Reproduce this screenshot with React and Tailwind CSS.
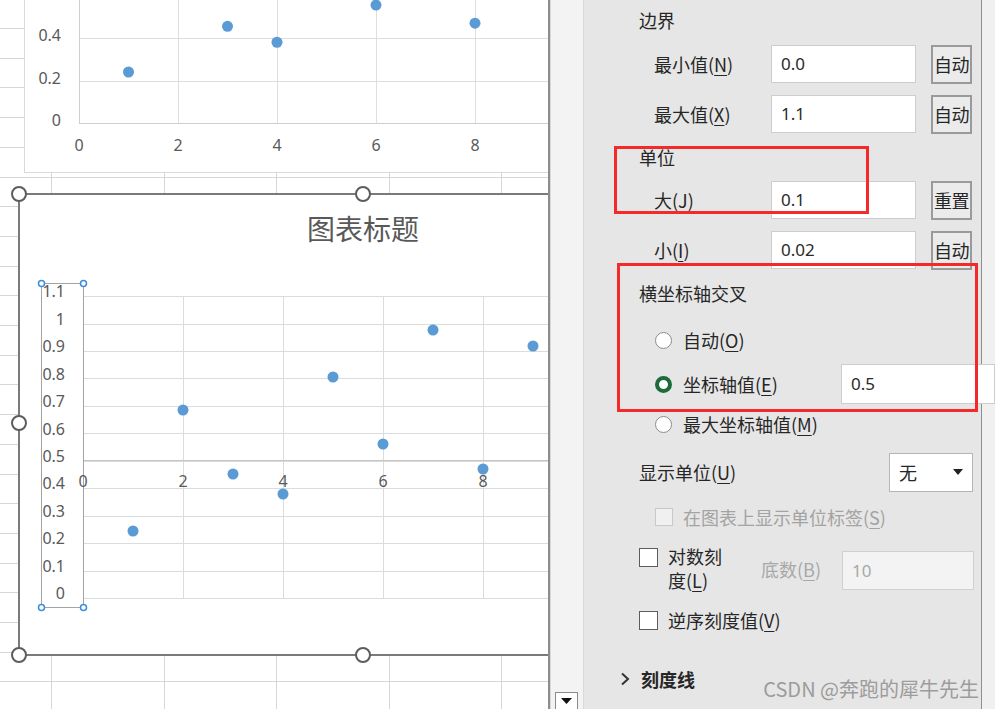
import React from "react";

const CJK = '"Noto Sans CJK SC", "Noto Sans", sans-serif';
const NUM = '"Noto Sans", "Open Sans", sans-serif';

const sheetRows = Array.from({ length: 25 }, (_, i) => 28 + 29.7 * (i - 1));
const sheetCols = [51, 163.5, 276, 388.5, 501];

function M({ t, k }) {
  return (
    <span>
      {t}(<span className="underline underline-offset-[3px] decoration-1">{k}</span>)
    </span>
  );
}

function SheetGrid() {
  return (
    <svg className="absolute left-0 top-0" width="548" height="709" shapeRendering="crispEdges">
      {sheetRows.map((y, i) => (
        <line key={"r" + i} x1="0" x2="548" y1={Math.round(y) + 0.5} y2={Math.round(y) + 0.5} stroke="#d6d6d6" />
      ))}
      {sheetCols.map((x, i) => (
        <line key={"c" + i} x1={Math.round(x) + 0.5} x2={Math.round(x) + 0.5} y1="0" y2="709" stroke="#d6d6d6" />
      ))}
    </svg>
  );
}

function Chart1() {
  const yv = (v) => 123 - 212.5 * v;
  const pts = [
    [1, 0.24],
    [3, 0.455],
    [4, 0.38],
    [6, 0.555],
    [8, 0.47],
  ];
  return (
    <div className="absolute left-[24px] top-[-21px] w-[700px] h-[194px] bg-white border border-[#d9d9d9]">
      <svg className="absolute left-0 top-0" width="698" height="192" viewBox="25 -20 698 192">
        <g shapeRendering="crispEdges">
          {[0.2, 0.4, 0.6].map((v) => (
            <line key={v} x1="79" x2="723" y1={Math.round(yv(v)) + 0.5} y2={Math.round(yv(v)) + 0.5} stroke="#dedede" />
          ))}
          {[178, 277, 376, 475, 574, 673].map((x) => (
            <line key={x} x1={x + 0.5} x2={x + 0.5} y1="-20" y2="123" stroke="#dedede" />
          ))}
          <line x1="79.5" x2="79.5" y1="-20" y2="123" stroke="#cfcfcf" />
          <line x1="79" x2="723" y1="123.5" y2="123.5" stroke="#cfcfcf" />
        </g>
        <g fill="#595959" fontSize="16" fontFamily={NUM}>
          {[
            ["0.6", 0.6],
            ["0.4", 0.4],
            ["0.2", 0.2],
            ["0", 0],
          ].map(([t, v]) => (
            <text key={t} x="61" y={yv(v) - 1} textAnchor="end" dominantBaseline="middle">
              {t}
            </text>
          ))}
          {[0, 2, 4, 6, 8].map((n) => (
            <text key={n} x={79 + 49.5 * n} y="147" textAnchor="middle" dominantBaseline="middle">
              {n}
            </text>
          ))}
        </g>
        {pts.map(([x, v], i) => (
          <circle key={i} cx={79 + 49.5 * x} cy={yv(v)} r="5.5" fill="#5b9bd5" />
        ))}
      </svg>
    </div>
  );
}

function Chart2() {
  const gy = (k) => 598 - 27.45 * k;
  const labels = ["0", "0.1", "0.2", "0.3", "0.4", "0.5", "0.6", "0.7", "0.8", "0.9", "1", "1.1"];
  const pts = [
    [133, 531],
    [183, 410],
    [233, 474],
    [283, 494],
    [333, 377],
    [383, 444],
    [433, 330],
    [483, 469],
    [533, 346],
  ];
  return (
    <div className="absolute left-[18px] top-[193px] w-[690px] h-[463px] bg-white border-2 border-[#7a7a7a]">
      <svg className="absolute left-0 top-0" width="686" height="459" viewBox="20 195 686 459">
        <g shapeRendering="crispEdges">
          {labels.map((_, k) => (
            <line key={k} x1="83" x2="706" y1={Math.round(gy(k)) + 0.5} y2={Math.round(gy(k)) + 0.5} stroke="#dcdcdc" />
          ))}
          {[183, 283, 383, 483, 583, 683].map((x) => (
            <line key={x} x1={x + 0.5} x2={x + 0.5} y1="296" y2="598" stroke="#dcdcdc" />
          ))}
          <line x1="83" x2="706" y1="460.5" y2="460.5" stroke="#c4c4c4" />
          <rect x="41.5" y="283.5" width="42" height="324" fill="none" stroke="#a3a3a3" strokeWidth="1.5" />
        </g>
        <g fill="#595959" fontSize="16" fontFamily={NUM}>
          {labels.map((t, k) => (
            <text key={t} x="65" y={gy(k) - 3} textAnchor="end" dominantBaseline="middle">
              {t}
            </text>
          ))}
          {[0, 2, 4, 6, 8].map((n) => (
            <text key={n} x={83 + 50 * n} y="483" textAnchor="middle" dominantBaseline="middle">
              {n}
            </text>
          ))}
        </g>
        {[
          [41.5, 283.5],
          [83.5, 283.5],
          [41.5, 607.5],
          [83.5, 607.5],
        ].map(([x, y], i) => (
          <circle key={i} cx={x} cy={y} r="3" fill="white" stroke="#3b8ede" strokeWidth="1.5" />
        ))}
        {pts.map(([x, y], i) => (
          <circle key={i} cx={x} cy={y} r="5.5" fill="#5b9bd5" />
        ))}
      </svg>
      <div
        className="relative pt-[16px] text-center text-[28px] leading-[34px] text-[#595959]"
        style={{ fontFamily: CJK }}
      >
        图表标题
      </div>
    </div>
  );
}

function Handle({ className }) {
  return (
    <div
      className={
        "absolute w-[16px] h-[16px] rounded-full bg-white border-[2.5px] border-[#5c5c5c] " + className
      }
    />
  );
}

function ValueRow({ label, value, btn }) {
  return (
    <div className="h-[40px] pl-[70px] flex items-center">
      <div className="w-[117px] shrink-0">{label}</div>
      <div
        className="w-[145px] h-[38px] shrink-0 bg-white border border-[#cdcdcd] flex items-center pl-[9px] text-[17px] text-[#2a2a2a]"
        style={{ fontFamily: NUM }}
      >
        {value}
      </div>
      <div className="ml-[15px] w-[41px] h-[39px] shrink-0 border-2 border-[#9a9a9a] bg-[#ebebeb] flex items-center justify-center text-[18px] leading-none tracking-[-0.5px]">
        {btn}
      </div>
    </div>
  );
}

function Radio({ checked }) {
  return checked ? (
    <div className="w-[17px] h-[17px] rounded-full bg-white border-[4px] border-[#1d6b3c] shrink-0" />
  ) : (
    <div className="w-[17px] h-[17px] rounded-full bg-white border border-[#8c8c8c] shrink-0" />
  );
}

function Panel() {
  return (
    <div className="relative w-[397px] h-full shrink-0 text-[18px] text-[#262626]" style={{ fontFamily: CJK }}>
      <div className="h-[40px] pl-[55px] flex items-center">边界</div>
      <div className="h-[4px]" />
      <ValueRow label={<M t="最小值" k="N" />} value="0.0" btn="自动" />
      <div className="h-[10px]" />
      <ValueRow label={<M t="最大值" k="X" />} value="1.1" btn="自动" />
      <div className="h-[46px] pl-[55px] flex items-center">单位</div>
      <ValueRow label={<M t="大" k="J" />} value="0.1" btn="重置" />
      <div className="h-[10px]" />
      <ValueRow label={<M t="小" k="I" />} value="0.02" btn="自动" />
      <div className="h-[46px] pl-[55px] flex items-center">横坐标轴交叉</div>
      <div className="h-[48px] pl-[71px] flex items-center">
        <Radio />
        <span className="ml-[11px]">
          <M t="自动" k="O" />
        </span>
      </div>
      <div className="h-[40px] pl-[71px] flex items-center">
        <Radio checked />
        <span className="ml-[11px] w-[158px] shrink-0">
          <M t="坐标轴值" k="E" />
        </span>
        <div
          className="relative z-10 w-[154px] h-[40px] shrink-0 bg-white border border-[#cdcdcd] flex items-center pl-[9px] text-[17px] text-[#2a2a2a]"
          style={{ fontFamily: NUM }}
        >
          0.5
        </div>
      </div>
      <div className="h-[40px] pl-[71px] flex items-center">
        <Radio />
        <span className="ml-[11px]">
          <M t="最大坐标轴值" k="M" />
        </span>
      </div>
      <div className="h-[8px]" />
      <div className="h-[40px] pl-[55px] pr-[8px] flex items-center">
        <span className="flex-1">
          <M t="显示单位" k="U" />
        </span>
        <div className="w-[84px] h-[39px] bg-white border border-[#b5b5b5] flex items-center pl-[9px] pr-[9px]">
          <span className="flex-1">无</span>
          <svg width="10" height="6" viewBox="0 0 10 6">
            <path d="M0 0 L10 0 L5 6 Z" fill="#222" />
          </svg>
        </div>
      </div>
      <div className="h-[50px] pl-[71px] flex items-center text-[#a3a3a3]">
        <div className="w-[18px] h-[18px] bg-[#f0f0f0] border border-[#c9c9c9] shrink-0" />
        <span className="ml-[10px]">
          <M t="在图表上显示单位标签" k="S" />
        </span>
      </div>
      <div className="h-[48px] pl-[55px] flex items-start">
        <div className="mt-[6px] w-[19px] h-[19px] bg-white border border-[#5c5c5c] shrink-0" />
        <div className="ml-[10px] w-[93px] pt-[2px] leading-[24px]">
          <div>对数刻</div>
          <div>
            <M t="度" k="L" />
          </div>
        </div>
        <div className="w-[81px] mt-[15px] leading-[24px] text-[#a8a8a8]">
          <M t="底数" k="B" />
        </div>
        <div
          className="mt-[9px] w-[132px] h-[39px] bg-[#f3f3f3] border border-[#d0d0d0] flex items-center pl-[9px] text-[17px] text-[#a8a8a8]"
          style={{ fontFamily: NUM }}
        >
          10
        </div>
      </div>
      <div className="h-[20px]" />
      <div className="h-[20px] pl-[55px] flex items-center">
        <div className="w-[19px] h-[19px] bg-white border border-[#5c5c5c] shrink-0" />
        <span className="ml-[10px]">
          <M t="逆序刻度值" k="V" />
        </span>
      </div>
      <div className="h-[34px]" />
      <div className="h-[30px] pl-[36px] flex items-center font-bold">
        <svg width="10" height="14" viewBox="0 0 10 14">
          <path d="M2 1.5 L8 7 L2 12.5" fill="none" stroke="#333" strokeWidth="2" />
        </svg>
        <span className="ml-[11px]">刻度线</span>
      </div>

      <div className="absolute left-[30px] top-[146px] w-[255px] h-[68px] border-[3px] border-[#f42a2a]" />
      <div className="absolute left-[33px] top-[263px] w-[361px] h-[149px] border-[3px] border-[#f42a2a] z-20" />

      <div className="absolute right-[2px] top-[676px] text-[20px] leading-[26px] text-[#9c9c9c] whitespace-nowrap">
        CSDN @奔跑的犀牛先生
      </div>
    </div>
  );
}

export default function App() {
  return (
    <div className="flex w-[995px] h-[709px] overflow-hidden bg-[#e6e6e6]">
      <div className="relative w-[550px] h-full shrink-0 bg-white overflow-hidden border-r-2 border-[#8d8d8d]">
        <SheetGrid />
        <Chart1 />
        <Chart2 />
        <Handle className="left-[11px] top-[186px]" />
        <Handle className="left-[355px] top-[186px]" />
        <Handle className="left-[11px] top-[415px]" />
        <Handle className="left-[11px] top-[647px]" />
        <Handle className="left-[355px] top-[647px]" />
      </div>
      <div className="relative w-[34px] h-full shrink-0 bg-[#f3f3f3] border-l border-r border-[#d9d9d9]">
        <div className="absolute left-[4px] top-[692px] w-[23px] h-[22px] bg-white border border-[#8a8a8a] flex justify-center pt-[5px]">
          <svg width="11" height="6" viewBox="0 0 11 6">
            <path d="M0 0 L11 0 L5.5 6 Z" fill="#111" />
          </svg>
        </div>
      </div>
      <Panel />
      <div className="w-[14px] h-full shrink-0 bg-[#f0f0f0] border-l border-[#8f8f8f]" />
    </div>
  );
}
